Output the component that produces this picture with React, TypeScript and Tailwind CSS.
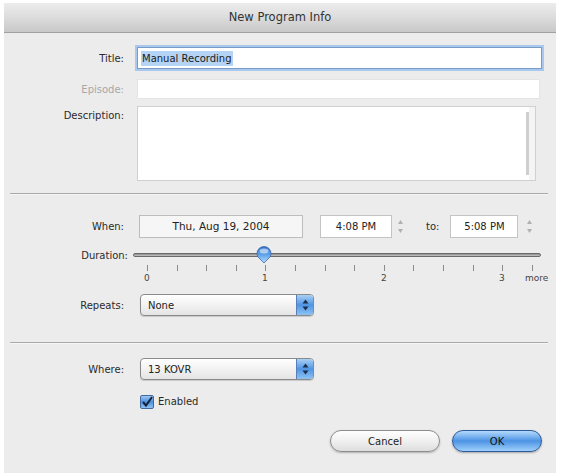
import React from "react";

const font = { fontFamily: '"DejaVu Sans", "Lucida Grande", sans-serif' };

function Label({ children, gray }: { children: React.ReactNode; gray?: boolean }) {
  return (
    <div className={`w-[120px] shrink-0 text-right text-[10px] ${gray ? "text-[#a8a8a8]" : "text-[#2a2a2a]"}`}>
      {children}
    </div>
  );
}

function Stepper() {
  return (
    <div className="ml-[3px] flex h-[23px] w-[11px] flex-col items-center justify-center gap-[3px]">
      <svg width="7" height="6" viewBox="0 0 7 6">
        <path d="M3.5 1 L6 5 L1 5 Z" fill="#b0b0b0" />
      </svg>
      <svg width="7" height="6" viewBox="0 0 7 6">
        <path d="M1 1 L6 1 L3.5 5 Z" fill="#b0b0b0" />
      </svg>
    </div>
  );
}

function Popup({ text }: { text: string }) {
  return (
    <div className="flex h-[22px] w-[174px] overflow-hidden rounded-[4px] border border-[#8a8a8a] bg-gradient-to-b from-[#ffffff] via-[#f2f2f2] to-[#e4e4e4] shadow-[0_1px_1px_rgba(0,0,0,0.15)]">
      <div className="flex flex-1 items-center pl-[7px] text-[10px] text-[#222]">{text}</div>
      <div className="flex w-[17px] flex-col items-center justify-center gap-[2px] border-l border-[#5a7fb8] bg-gradient-to-b from-[#a9d0f5] via-[#4f95e3] to-[#8dc3f3]">
        <svg width="7" height="5" viewBox="0 0 7 5">
          <path d="M3.5 0.5 L6.5 4.5 L0.5 4.5 Z" fill="#1d2f4a" />
        </svg>
        <svg width="7" height="5" viewBox="0 0 7 5">
          <path d="M0.5 0.5 L6.5 0.5 L3.5 4.5 Z" fill="#1d2f4a" />
        </svg>
      </div>
    </div>
  );
}

const ticks = Array.from({ length: 14 }, (_, i) => i);

export default function App() {
  return (
    <div className="h-[473px] w-[562px] overflow-hidden bg-white pl-[4px] pr-[6px] pt-[3px]" style={font}>
      <div className="flex h-[470px] flex-col bg-[#ececec]">
        {/* title bar */}
        <div className="flex h-[30px] shrink-0 items-center justify-center border-b border-[#a0a0a0] bg-gradient-to-b from-[#ececec] via-[#dcdcdc] to-[#c8c8c8] text-[11.5px] text-[#333]">
          New Program Info
        </div>

        {/* Title */}
        <div className="mt-[14px] flex items-center gap-[13px]">
          <Label>Title:</Label>
          <div className="flex h-[22px] w-[405px] items-center border border-[#7a9cc9] bg-white pl-[3px] shadow-[0_0_0_2px_#a8c8ee]">
            <span className="bg-[#b5d3f5] px-[1px] text-[10px] text-[#1a1a1a]">Manual Recording</span>
          </div>
        </div>

        {/* Episode */}
        <div className="mt-[10px] flex items-center gap-[13px]">
          <Label gray>Episode:</Label>
          <div className="h-[20px] w-[403px] border border-[#e4e4e4] bg-white" />
        </div>

        {/* Description */}
        <div className="mt-[7px] flex items-start gap-[13px]">
          <div className="pt-[2px]">
            <Label>Description:</Label>
          </div>
          <div className="flex h-[75px] w-[399px] border border-[#d0d0d0] bg-white">
            <div className="flex-1" />
            <div className="my-[5px] w-[3px] bg-[#cfcfcf]" />
            <div className="w-[6px] bg-[#f4f4f4]" />
          </div>
        </div>

        {/* separator */}
        <div className="ml-[6px] mr-[8px] mt-[12px] h-[2px] border-t border-[#a9a9a9] bg-[#f6f6f6]" />

        {/* When */}
        <div className="mt-[20px] flex items-center">
          <Label>When:</Label>
          <div className="ml-[15px] flex h-[23px] w-[164px] items-center justify-center border border-[#bdbdbd] bg-[#f6f6f6] text-[10.5px] text-[#222]">
            Thu, Aug 19, 2004
          </div>
          <div className="ml-[17px] flex h-[23px] w-[72px] items-center justify-center border border-[#c4c4c4] bg-white text-[10px] text-[#222]">
            4:08 PM
          </div>
          <Stepper />
          <div className="ml-[20px] text-[10px] text-[#2a2a2a]">to:</div>
          <div className="ml-[11px] flex h-[23px] w-[68px] items-center justify-center border border-[#c4c4c4] bg-white text-[10px] text-[#222]">
            5:08 PM
          </div>
          <div className="ml-[3px]">
            <Stepper />
          </div>
        </div>

        {/* Duration */}
        <div className="mt-[9px] flex h-[16px] items-center">
          <div className="w-[124px] text-right text-[10px] text-[#2a2a2a]">Duration:</div>
          <div className="relative ml-[5px] h-[16px] w-[408px]">
            <div className="absolute left-0 right-0 top-[6px] h-[4px] rounded-full border border-[#6a6a6a] bg-gradient-to-b from-[#8a8a8a] to-[#c8c8c8]" />
            <svg className="absolute left-[123px] top-[-1px]" width="16" height="18" viewBox="0 0 16 18">
              <defs>
                <linearGradient id="th" x1="0" y1="0" x2="0" y2="1">
                  <stop offset="0" stopColor="#2f6fc4" />
                  <stop offset="0.5" stopColor="#5fa3ea" />
                  <stop offset="1" stopColor="#b6dcff" />
                </linearGradient>
              </defs>
              <path d="M8 17 L2 11 Q1 9 1 7.5 A7 7 0 0 1 15 7.5 Q15 9 14 11 Z" fill="url(#th)" stroke="#3b6aa8" strokeWidth="0.8" />
              <ellipse cx="8" cy="5" rx="4.5" ry="2.5" fill="#ffffff" opacity="0.55" />
            </svg>
          </div>
        </div>

        {/* ticks */}
        <div className="relative ml-[143px] mt-[2px] h-[18px] w-[410px]">
          {ticks.map((i) => (
            <div
              key={i}
              className="absolute top-0 h-[6px] w-[1px] bg-[#8a8a8a]"
              style={{ left: `${Math.round(i * 29.6)}px` }}
            />
          ))}
          <div className="absolute left-[-3px] top-[7px] text-[9px] text-[#444]">0</div>
          <div className="absolute left-[115px] top-[7px] text-[9px] text-[#444]">1</div>
          <div className="absolute left-[234px] top-[7px] text-[9px] text-[#444]">2</div>
          <div className="absolute left-[352px] top-[7px] text-[9px] text-[#444]">3</div>
          <div className="absolute left-[378px] top-[7px] text-[9px] text-[#444]">more</div>
        </div>

        {/* Repeats */}
        <div className="mt-[11px] flex items-center gap-[16px]">
          <Label>Repeats:</Label>
          <Popup text="None" />
        </div>

        {/* separator */}
        <div className="ml-[6px] mr-[8px] mt-[26px] h-[2px] border-t border-[#a9a9a9] bg-[#f6f6f6]" />

        {/* Where */}
        <div className="mt-[14px] flex items-center gap-[16px]">
          <Label>Where:</Label>
          <Popup text="13 KOVR" />
        </div>

        {/* Enabled */}
        <div className="ml-[136px] mt-[14px] flex items-center gap-[4px]">
          <div className="flex h-[14px] w-[14px] items-center justify-center rounded-[2px] border border-[#45699c] bg-gradient-to-b from-[#9cc8f2] via-[#4d8fdc] to-[#8fc2f2]">
            <svg width="12" height="12" viewBox="0 0 12 12">
              <path d="M2 6 L5 9.5 L11 1" fill="none" stroke="#13233d" strokeWidth="2" />
            </svg>
          </div>
          <span className="text-[10px] text-[#2a2a2a]">Enabled</span>
        </div>

        {/* Buttons */}
        <div className="mr-[14px] mt-[21px] flex justify-end gap-[12px]">
          <div className="flex h-[22px] w-[110px] items-center justify-center rounded-full border border-[#8d8d8d] bg-gradient-to-b from-[#ffffff] via-[#f0f0f0] to-[#dedede] text-[10px] text-[#222] shadow-[0_1px_2px_rgba(0,0,0,0.25)]">
            Cancel
          </div>
          <div className="flex h-[22px] w-[90px] items-center justify-center rounded-full border border-[#2d5a9a] bg-gradient-to-b from-[#b4dafc] via-[#4c93e4] to-[#9fd0fb] text-[10px] text-[#111] shadow-[0_1px_2px_rgba(0,0,0,0.3)]">
            OK
          </div>
        </div>
      </div>
    </div>
  );
}
